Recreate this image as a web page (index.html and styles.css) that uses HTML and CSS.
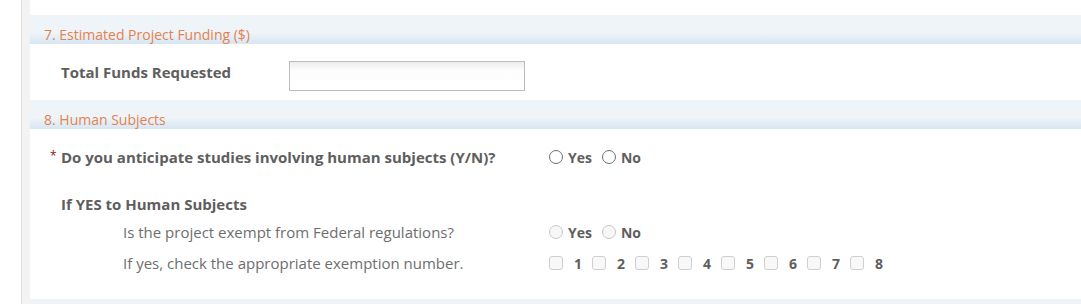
FILE: index.html
```html
<!DOCTYPE html>
<html lang="en">
<head>
  <meta charset="UTF-8" />
  <title>Application Form</title>
  <link rel="stylesheet" href="styles.css">
</head>
<body>

  <div class="page">
    <div class="panel">

      <div class="panel-top"></div>

      <!-- Seccion 7 -->
      <div class="section-head">7. Estimated Project Funding ($)</div>
      <div class="section-body funding">
        <div class="row funds-row">
          <div class="label label-strong funds-label">Total Funds Requested</div>
          <input type="text" class="text-input" />
        </div>
      </div>

      <!-- Seccion 8 -->
      <div class="section-head">8. Human Subjects</div>
      <div class="section-body human">
        <div class="row q-row">
          <div class="label label-strong q-label"><span class="req">*</span>Do you anticipate studies involving human subjects (Y/N)?</div>
          <div class="choices">
            <label class="choice"><span class="radio"></span>Yes</label>
            <label class="choice"><span class="radio"></span>No</label>
          </div>
        </div>

        <div class="sub-title label-strong">If YES to Human Subjects</div>

        <div class="row sub-row">
          <div class="label sub-label">Is the project exempt from Federal regulations?</div>
          <div class="choices">
            <label class="choice"><span class="radio off"></span>Yes</label>
            <label class="choice"><span class="radio off"></span>No</label>
          </div>
        </div>

        <div class="row sub-row">
          <div class="label sub-label">If yes, check the appropriate exemption number.</div>
          <div class="checks">
            <label class="check"><span class="box"></span>1</label>
            <label class="check"><span class="box"></span>2</label>
            <label class="check"><span class="box"></span>3</label>
            <label class="check"><span class="box"></span>4</label>
            <label class="check"><span class="box"></span>5</label>
            <label class="check"><span class="box"></span>6</label>
            <label class="check"><span class="box"></span>7</label>
            <label class="check"><span class="box"></span>8</label>
          </div>
        </div>
      </div>

      <div class="section-head next"></div>

    </div>
  </div>

</body>
</html>
```

FILE: styles.css
```css
body {
  margin: 0;
  font-family: "Open Sans", Arial, sans-serif;
  font-size: 15px;
  background: #fff;
  color: #666;
}

.page {
  margin-left: 21px;
  border-left: 1px solid #dedede;
  padding-left: 8px;
  background-color: #f3f3f3;
  height: 304px;
  overflow: hidden;
}

.panel {
  background-color: #fff;
}

.panel-top {
  height: 15px;
}

.section-head {
  height: 29px;
  box-sizing: border-box;
  padding: 11px 0 0 14px;
  color: #e3824f;
  font-size: 14px;
  line-height: 17px;
  background: linear-gradient(to bottom, #eff4f8 0%, #eff4f8 60%, #d7e6f2 100%);
}

.section-body {
  padding-left: 31px;
}

.row {
  display: flex;
  align-items: center;
}

.label {
  line-height: 20px;
}

.label-strong {
  font-weight: bold;
  color: #5e5e5e;
}

.funding {
  height: 56px;
  padding-top: 17px;
  box-sizing: border-box;
}

.funds-row {
  align-items: flex-start;
}

.funds-label {
  width: 228px;
  padding-top: 1px;
}

.text-input {
  width: 236px;
  height: 30px;
  box-sizing: border-box;
  border: 1px solid #bcbcbc;
  margin: 0;
  background: linear-gradient(to bottom, #ececec 0%, #fdfdfd 30%, #fff 100%);
}

.human {
  height: 170px;
  box-sizing: border-box;
  padding-top: 18px;
}

.q-row {
  height: 20px;
}

.q-label {
  width: 488px;
  position: relative;
}

.req {
  position: absolute;
  left: -11px;
  top: -1px;
  color: #8b1a1a;
  font-weight: normal;
  font-size: 12px;
}

.choices {
  display: flex;
  gap: 10px;
}

.choice {
  display: flex;
  align-items: center;
  gap: 5px;
  font-weight: bold;
  color: #5e5e5e;
  font-size: 14px;
}

.radio {
  width: 12px;
  height: 12px;
  border: 1px solid #707070;
  border-radius: 50%;
  background: #fff;
}

.radio.off {
  border-color: #c8c8c8;
  background: #f7f7f7;
}

.sub-title {
  margin-top: 27px;
  height: 20px;
  line-height: 20px;
}

.sub-row {
  height: 20px;
  padding-left: 62px;
}

.sub-row + .sub-row {
  margin-top: 11px;
}

.sub-title + .sub-row {
  margin-top: 8px;
}

.sub-label {
  width: 426px;
  color: #6e6e6e;
}

.checks {
  display: flex;
  gap: 6px;
}

.check {
  display: flex;
  align-items: center;
  gap: 11px;
  font-weight: bold;
  color: #5e5e5e;
  font-size: 14px;
  width: 37px;
}

.box {
  width: 12px;
  height: 12px;
  border: 1px solid #cfcfcf;
  border-radius: 3px;
  background: #f8f8f8;
}

.next {
  height: 10px;
  padding: 0;
}
```
